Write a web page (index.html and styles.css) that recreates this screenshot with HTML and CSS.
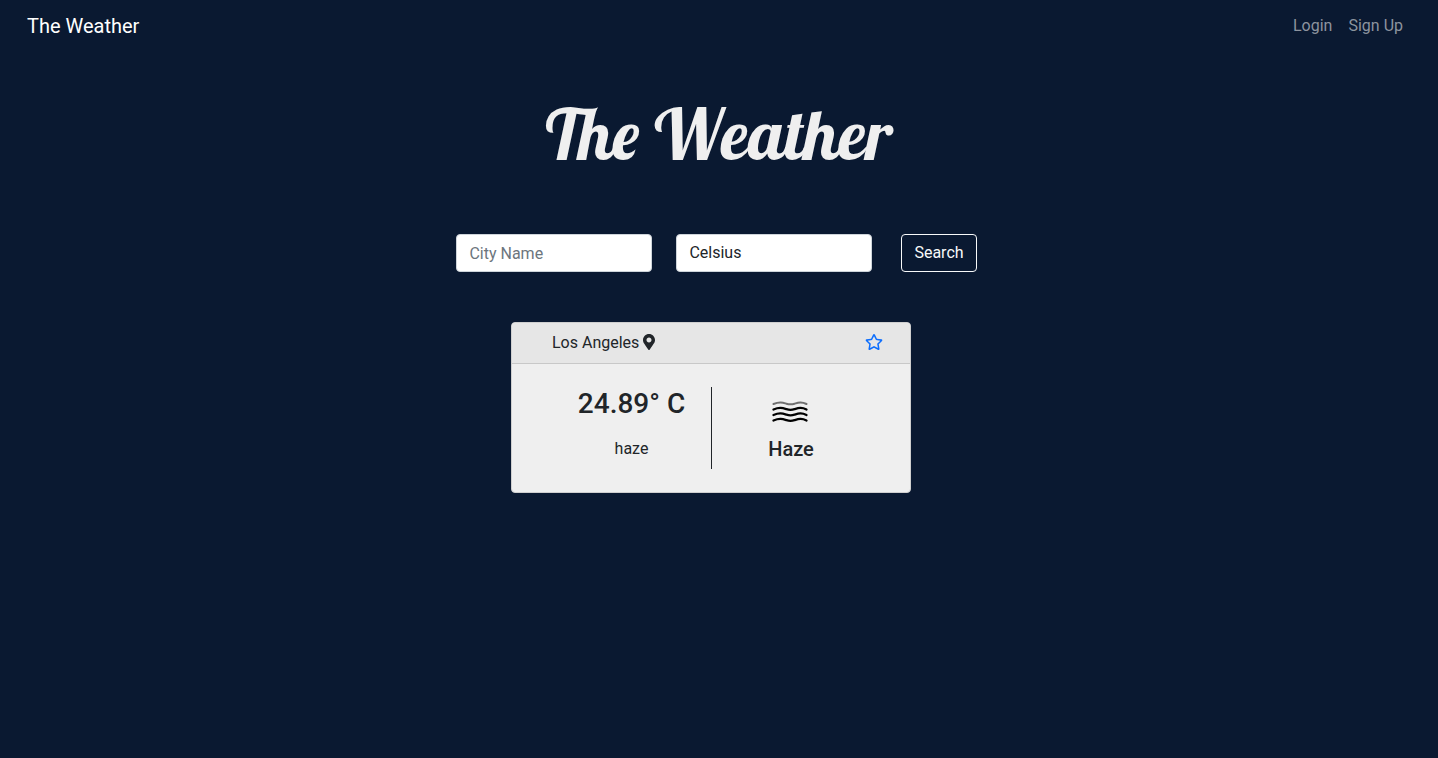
FILE: index.html
```html
<!DOCTYPE html>
<html lang="en">
<head>
<meta charset="utf-8">
<meta name="viewport" content="width=device-width, initial-scale=1">
<title>The Weather</title>
<link rel="stylesheet" href="styles.css">
</head>
<body>
<nav class="navbar">
  <a class="brand" href="#">The Weather</a>
  <div class="nav-links">
    <a href="#">Login</a>
    <a href="#">Sign Up</a>
  </div>
</nav>
<main>
  <h1 class="title">The Weather</h1>
  <form class="search">
    <input class="field" type="text" placeholder="City Name" aria-label="City name">
    <select class="field" aria-label="Temperature unit">
      <option>Celsius</option>
      <option>Fahrenheit</option>
    </select>
    <button class="search-button" type="submit">Search</button>
  </form>
  <section class="results">
    <article class="card">
      <header class="card-header">
        <span class="city">Los Angeles
          <svg class="pin" viewBox="0 0 384 512" aria-hidden="true"><path fill="currentColor" d="M172.268 501.67C26.97 291.031 0 269.413 0 192 0 85.961 85.961 0 192 0s192 85.961 192 192c0 77.413-26.97 99.031-172.268 309.67-9.535 13.774-29.93 13.773-39.464 0zM192 272c44.183 0 80-35.817 80-80s-35.817-80-80-80-80 35.817-80 80 35.817 80 80 80z"/></svg>
        </span>
        <button class="favorite" type="button" aria-label="Add to favorites">
          <svg class="star" viewBox="0 0 576 512" aria-hidden="true"><path fill="currentColor" d="M528.1 171.5L382 150.2 316.7 17.8c-11.7-23.6-45.6-23.9-57.4 0L194 150.2 47.9 171.5c-26.2 3.8-36.7 36.1-17.7 54.6l105.7 103-25 145.5c-4.5 26.3 23.2 46 46.4 33.7L288 439.6l130.7 68.7c23.2 12.2 50.9-7.4 46.4-33.7l-25-145.5 105.7-103c19-18.5 8.5-50.8-17.7-54.6zM388.6 312.3l23.7 138.4L288 385.4l-124.3 65.3 23.7-138.4-100.6-98 139-20.2 62.2-126 62.2 126 139 20.2-100.6 98z"/></svg>
        </button>
      </header>
      <div class="card-body">
        <div class="reading">
          <h2 class="temperature">24.89° C</h2>
          <p class="description">haze</p>
        </div>
        <div class="condition">
          <svg class="haze" viewBox="0 0 50 50" fill="none" stroke="#000" stroke-width="2" stroke-linecap="round" aria-hidden="true">
            <path stroke="#6f6f6f" d="M7.500 17c6-2.500 9-1.500 13-.3 3 1 5 1 8 0 4-1.200 7-2.200 12 .3"/>
            <path stroke-width="2.300" d="M7.500 22.500c6-2.500 9-1.500 13-.3 3 1 5 1 8 0 4-1.200 7-2.200 12 .3"/>
            <path stroke-width="2.300" d="M7.500 28c6-2.500 9-1.500 13-.3 3 1 5 1 8 0 4-1.200 7-2.200 12 .3"/>
            <path stroke-width="2.300" d="M7.500 33.500c6-2.500 9-1.500 13-.3 3 1 5 1 8 0 4-1.200 7-2.200 12 .3"/>
          </svg>
          <h3 class="condition-name">Haze</h3>
        </div>
      </div>
    </article>
  </section>
</main>
</body>
</html>
```
FILE: styles.css
```css
* {
  box-sizing: border-box;
}

body {
  margin: 0;
  background: #0a1931;
  color: #212529;
  font: 16px/24px Roboto, "Liberation Sans", sans-serif;
}

h1, h2, h3, p {
  margin: 0;
}

.navbar {
  display: flex;
  align-items: center;
  justify-content: space-between;
  padding: 11px 35px 11px 27px;
}

.navbar a {
  text-decoration: none;
}

.brand {
  color: #fff;
  font-size: 20px;
  line-height: 30px;
}

.nav-links {
  display: flex;
  gap: 16px;
}

.nav-links a {
  color: #8d949f;
}

.title {
  margin: 36px 0 54px;
  color: #efefef;
  font: 400 70px/92px Lobster, "Liberation Serif", serif;
  text-align: center;
}

.search {
  display: flex;
  flex-wrap: wrap;
  justify-content: center;
  gap: 24px;
  padding-right: 5px;
}

.field {
  width: 196px;
  height: 38px;
  padding: 6px 12px;
  border: 1px solid #ced4da;
  border-radius: 4px;
  background: #fff;
  color: #212529;
  font: inherit;
  appearance: none;
}

.field::placeholder {
  color: #6c757d;
  opacity: 1;
}

.search-button {
  height: 38px;
  margin-left: 5px;
  padding: 6px 12px;
  border: 1px solid #f8f9fa;
  border-radius: 4px;
  background: transparent;
  color: #f8f9fa;
  font: inherit;
}

.results {
  display: flex;
  justify-content: center;
  padding: 50px 16px 24px 0;
}

.card {
  width: 400px;
  border: 1px solid #cfcfcf;
  border-radius: 4px;
  background: #efefef;
}

.card-header {
  display: flex;
  align-items: center;
  justify-content: space-between;
  padding: 8px 27px 8px 40px;
  border-bottom: 1px solid #c8c8c8;
  border-radius: 3px 3px 0 0;
  background: #e6e6e6;
}

.city {
  display: flex;
  align-items: center;
  gap: 4px;
}

.pin {
  width: 12px;
  height: 16px;
  margin-bottom: 2px;
}

.favorite {
  display: flex;
  padding: 0 0 2px;
  border: 0;
  background: none;
  color: #0d6efd;
}

.star {
  width: 18px;
  height: 16px;
}

.card-body {
  display: grid;
  grid-template-columns: 1fr 1fr;
  padding: 23px 40px;
  text-align: center;
}

.condition {
  border-left: 1px solid #212529;
}

.temperature {
  margin-bottom: 16px;
  font-size: 28px;
  font-weight: 500;
  line-height: 34px;
}

.condition-name {
  margin-bottom: 8px;
  font-size: 20px;
  font-weight: 500;
  line-height: 24px;
}

.haze {
  display: block;
  width: 50px;
  height: 50px;
  margin: 0 auto;
}
```
